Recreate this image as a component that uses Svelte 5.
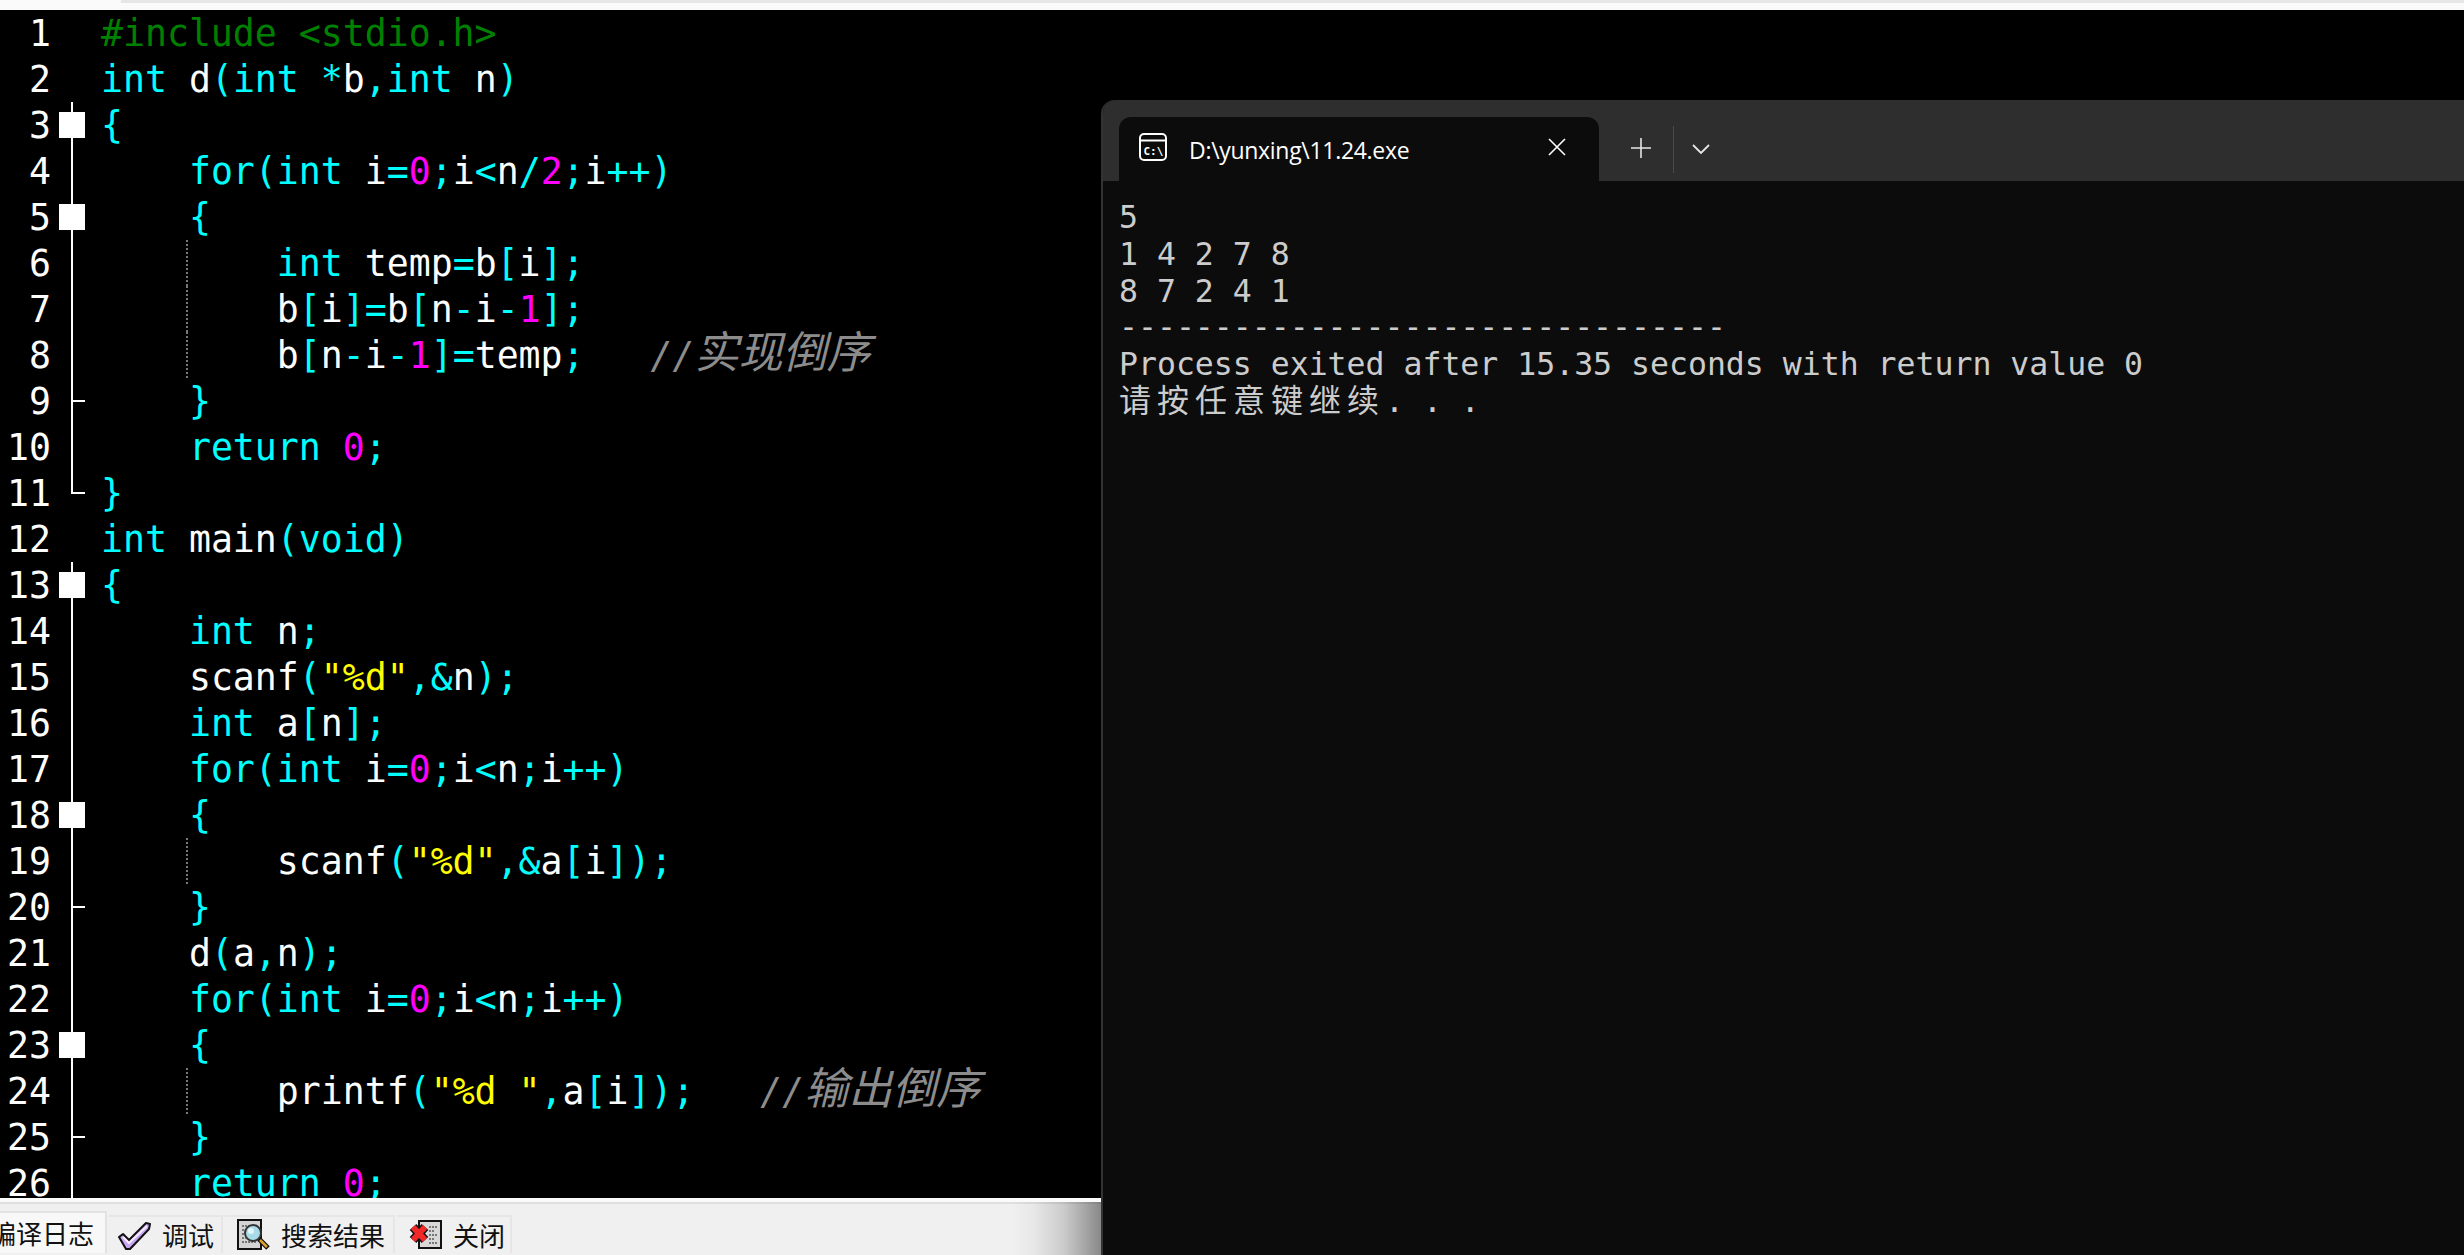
<script lang="ts">
  const source: string[] = [
    '#include <stdio.h>',
    'int d(int *b,int n)',
    '{',
    '    for(int i=0;i<n/2;i++)',
    '    {',
    '        int temp=b[i];',
    '        b[i]=b[n-i-1];',
    '        b[n-i-1]=temp;   //实现倒序',
    '    }',
    '    return 0;',
    '}',
    'int main(void)',
    '{',
    '    int n;',
    '    scanf("%d",&n);',
    '    int a[n];',
    '    for(int i=0;i<n;i++)',
    '    {',
    '        scanf("%d",&a[i]);',
    '    }',
    '    d(a,n);',
    '    for(int i=0;i<n;i++)',
    '    {',
    '        printf("%d ",a[i]);   //输出倒序',
    '    }',
    '    return 0;'
  ];

  // fold gutter marker per line number
  const boxes = [3, 5, 13, 18, 23];
  const ticks = [9, 20, 25];
  const ends = [11];
  const guides = [6, 7, 8, 19, 24];

  function foldKind(n: number): string {
    if (boxes.includes(n)) return 'box';
    if (ticks.includes(n)) return 'tick';
    if (ends.includes(n)) return 'end';
    if (n < 3 || n === 12) return '';
    return 'line';
  }

  const KEYWORDS = ['int', 'for', 'return', 'void'];

  function tokenize(line: string) {
    if (line.startsWith('#')) return [{ text: line, kind: 'pre' }];
    const out: { text: string; kind: string }[] = [];
    const re = /(\/\/)|([\u4e00-\u9fff]+)|("[^"]*")|(\d+)|([a-z_]+)|(\s+)|(.)/g;
    let m;
    while ((m = re.exec(line))) {
      let kind = 'sym';
      if (m[1]) kind = 'comment';
      else if (m[2]) kind = 'comment wide';
      else if (m[3]) kind = 'str';
      else if (m[4]) kind = 'num';
      else if (m[5]) kind = KEYWORDS.includes(m[5]) ? 'sym' : 'id';
      else if (m[6]) kind = 'id';
      out.push({ text: m[0], kind });
    }
    return out;
  }

  const output = ['5', '1 4 2 7 8', '8 7 2 4 1', '-'.repeat(32), 'Process exited after 15.35 seconds with return value 0'];
</script>

<div class="screen">
  <div class="topbar"><div class="topstrip"></div></div>

  <div class="editor">
    {#each source as line, i}
      <div class="row">
        <span class="num">{i + 1}</span>
        <span class="fold {foldKind(i + 1)}"></span>
        <span class="code" class:guide={guides.includes(i + 1)}>
          {#each tokenize(line) as t}<span class={t.kind}>{t.text}</span>{/each}
        </span>
      </div>
    {/each}
  </div>

  <div class="panel">
    <div class="tabs">
      <div class="tab active"><span>编译日志</span></div>
      <div class="tab check">
        <svg width="34" height="30" viewBox="0 0 34 30">
          <path d="M2 17 L6 14 L12 20 L29 3 L33 4 L32 9 L13 29 L9 29 Z" fill="#c9a6f2" stroke="#111" stroke-width="2" stroke-linejoin="round" />
          <path d="M6 17 L12 23 L30 6" fill="none" stroke="#f3ecff" stroke-width="2" />
        </svg>
        <span>调试</span>
      </div>
      <div class="tab search">
        <svg width="34" height="32" viewBox="0 0 34 32">
          <rect x="1" y="1" width="23" height="29" fill="#d4d4d4" stroke="#111" stroke-width="2" />
          <path d="M5 7h14M5 11h4M5 15h4M5 19h4M5 23h14" stroke="#777" stroke-width="2" stroke-dasharray="2 1" />
          <circle cx="16" cy="14" r="8" fill="#a8dbe8" stroke="#333" stroke-width="2" />
          <circle cx="14" cy="12" r="3" fill="#e4f6fa" />
          <path d="M22 20 L31 29" stroke="#111" stroke-width="5" />
          <path d="M23 21 L30 28" stroke="#e0a030" stroke-width="2.5" />
        </svg>
        <span>搜索结果</span>
      </div>
      <div class="tab closer">
        <svg width="34" height="32" viewBox="0 0 34 32">
          <path d="M10 2 H32 V29 H10 Z" fill="#d8d8d8" stroke="#111" stroke-width="2" />
          <path d="M20 8h8M20 12h6M20 16h8M20 20h6M20 24h8" stroke="#777" stroke-width="2" stroke-dasharray="2 1" />
          <path d="M4 8 L16 21 M16 8 L4 21" stroke="#111" stroke-width="9" />
          <path d="M4 8 L16 21 M16 8 L4 21" stroke="#f02828" stroke-width="6" />
        </svg>
        <span>关闭</span>
      </div>
    </div>
  </div>

  <div class="terminal">
    <div class="titlebar">
      <div class="termtab">
        <svg class="termicon" width="28" height="28" viewBox="0 0 28 28">
          <rect x="1" y="1" width="26" height="26" rx="4" fill="none" stroke="#fff" stroke-width="2" />
          <path d="M1 7.5H27" stroke="#fff" stroke-width="2" />
          <text x="4.5" y="21.5" class="cpath">C:\</text>
        </svg>
        <span class="termtitle">D:\yunxing\11.24.exe</span>
        <svg class="termclose" width="18" height="18" viewBox="0 0 18 18">
          <path d="M1 1L17 17M17 1L1 17" stroke="#fff" stroke-width="1.6" />
        </svg>
      </div>
      <svg class="plus" width="22" height="22" viewBox="0 0 22 22">
        <path d="M11 1V21M1 11H21" stroke="#e6e6e6" stroke-width="1.6" />
      </svg>
      <span class="divider"></span>
      <svg class="chev" width="18" height="10" viewBox="0 0 18 10">
        <path d="M1 1L9 9L17 1" fill="none" stroke="#e6e6e6" stroke-width="1.8" />
      </svg>
    </div>
    <div class="output">
      {#each output as l}<div class="outline">{l}</div>{/each}
      <div class="outline"><span class="cjk">请按任意键继续</span>. . .</div>
    </div>
  </div>
</div>

<style>
  :global(body) {
    margin: 0;
    background: #000;
  }

  .screen {
    position: relative;
    width: 2464px;
    height: 1255px;
    overflow: hidden;
    display: flex;
    flex-direction: column;
    background: #000;
  }

  .topbar {
    height: 10px;
    flex: none;
    background: #fafafa;
    padding-left: 121px;
  }
  .topstrip {
    height: 3px;
    background: #e6e6e6;
  }

  .editor {
    height: 1187px;
    flex: none;
    padding-top: 1px;
    overflow: hidden;
    font-family: "DejaVu Sans Mono", monospace;
    font-size: 36.5px;
    line-height: 46px;
    color: #fff;
  }

  .row {
    display: flex;
    height: 46px;
  }
  .num {
    width: 51px;
    flex: none;
    text-align: right;
  }
  .fold {
    position: relative;
    width: 50px;
    flex: none;
  }
  .fold.line::before,
  .fold.tick::before,
  .fold.box::before {
    content: "";
    position: absolute;
    left: 20px;
    top: -1px;
    width: 2px;
    height: 47px;
    background: #fff;
  }
  .fold.end::before {
    content: "";
    position: absolute;
    left: 20px;
    top: -1px;
    width: 2px;
    height: 24px;
    background: #fff;
  }
  .fold.tick::after,
  .fold.end::after {
    content: "";
    position: absolute;
    left: 20px;
    top: 21px;
    width: 14px;
    height: 2px;
    background: #fff;
  }
  .fold.box::after {
    content: "";
    position: absolute;
    left: 8px;
    top: 9px;
    width: 26px;
    height: 26px;
    background: #fff;
  }

  .code {
    position: relative;
    white-space: pre;
    flex: 1;
  }
  .code.guide::before {
    content: "";
    position: absolute;
    left: 85px;
    top: -1px;
    height: 46px;
    border-left: 2px dotted #777;
  }

  .id { color: #fff; }
  .sym { color: #00ffff; }
  .num { color: #fff; }
  .code .num { color: #ff00ff; }
  .str { color: #ffff00; }
  .pre { color: #008000; }
  .comment {
    color: #8c8c8c;
    font-style: italic;
  }
  .wide {
    font-family: "Noto Sans CJK SC", sans-serif;
    font-size: 44px;
    line-height: 0;
  }

  .panel {
    flex: 1;
    width: 1101px;
    box-sizing: border-box;
    border-top: 4px solid #fbfbfb;
    background: linear-gradient(to right, #f0f0f0 1012px, #e8e8e8 1033px, #cccccc 1063px, #aaaaaa 1083px, #888888 1101px);
  }
  .panel::before {
    content: "";
    display: block;
    height: 2px;
    background: rgba(0, 0, 0, 0.07);
  }

  .tabs {
    display: flex;
    align-items: flex-end;
    height: 49px;
    margin-left: -10px;
    gap: 2px;
    font-family: "Noto Sans CJK SC", sans-serif;
    font-size: 26px;
    line-height: 34px;
    color: #111;
  }
  .tab {
    display: flex;
    align-items: center;
    height: 38px;
    box-sizing: border-box;
    background: #f0f0f0;
    border-top: 2px solid #e6e6e6;
    border-right: 2px solid #e6e6e6;
  }
  .tab.active {
    height: 42px;
    width: 117px;
    background: #f8f8f8;
    border-color: #e2e2e2;
  }
  .tab.check {
    width: 114px;
    padding-left: 8px;
    gap: 11px;
  }
  .tab.search {
    width: 170px;
    padding-left: 12px;
    gap: 10px;
  }
  .tab.closer {
    width: 115px;
    padding-left: 12px;
    gap: 10px;
  }

  .terminal {
    position: absolute;
    left: 1101px;
    top: 100px;
    width: 1363px;
    height: 1155px;
    box-sizing: border-box;
    background: #0c0c0c;
    border-left: 2px solid #333;
    border-top-left-radius: 14px;
    overflow: hidden;
  }

  .titlebar {
    display: flex;
    align-items: flex-end;
    height: 81px;
    padding-left: 16px;
    background: #2e2e2e;
  }
  .termtab {
    display: flex;
    align-items: center;
    width: 480px;
    height: 64px;
    box-sizing: border-box;
    padding: 0 33px 0 20px;
    background: #0c0c0c;
    border-radius: 12px 12px 0 0;
  }
  .termicon {
    flex: none;
    margin-top: -5px;
  }
  .cpath {
    font-family: "DejaVu Sans Mono", monospace;
    font-size: 11px;
    font-weight: bold;
    fill: #fff;
  }
  .termtitle {
    flex: 1;
    margin-left: 22px;
    margin-top: 2px;
    font-family: "Open Sans", "Noto Sans", sans-serif;
    font-size: 23px;
    letter-spacing: -0.3px;
    color: #fff;
    white-space: nowrap;
  }
  .termclose {
    margin-top: -5px;
  }
  .plus {
    margin: 0 0 22px 31px;
  }
  .divider {
    width: 1px;
    height: 47px;
    margin: 0 0 8px 21px;
    background: #4a4a4a;
  }
  .chev {
    margin: 0 0 27px 18px;
  }

  .output {
    padding: 18px 0 0 16px;
    font-family: "DejaVu Sans Mono", monospace;
    font-size: 31.5px;
    line-height: 36.8px;
    color: #cccccc;
  }
  .outline {
    height: 36.8px;
    white-space: pre;
  }
  .cjk {
    font-family: "Noto Sans CJK SC", sans-serif;
    font-size: 32px;
    letter-spacing: 6px;
    line-height: 0;
  }
</style>
